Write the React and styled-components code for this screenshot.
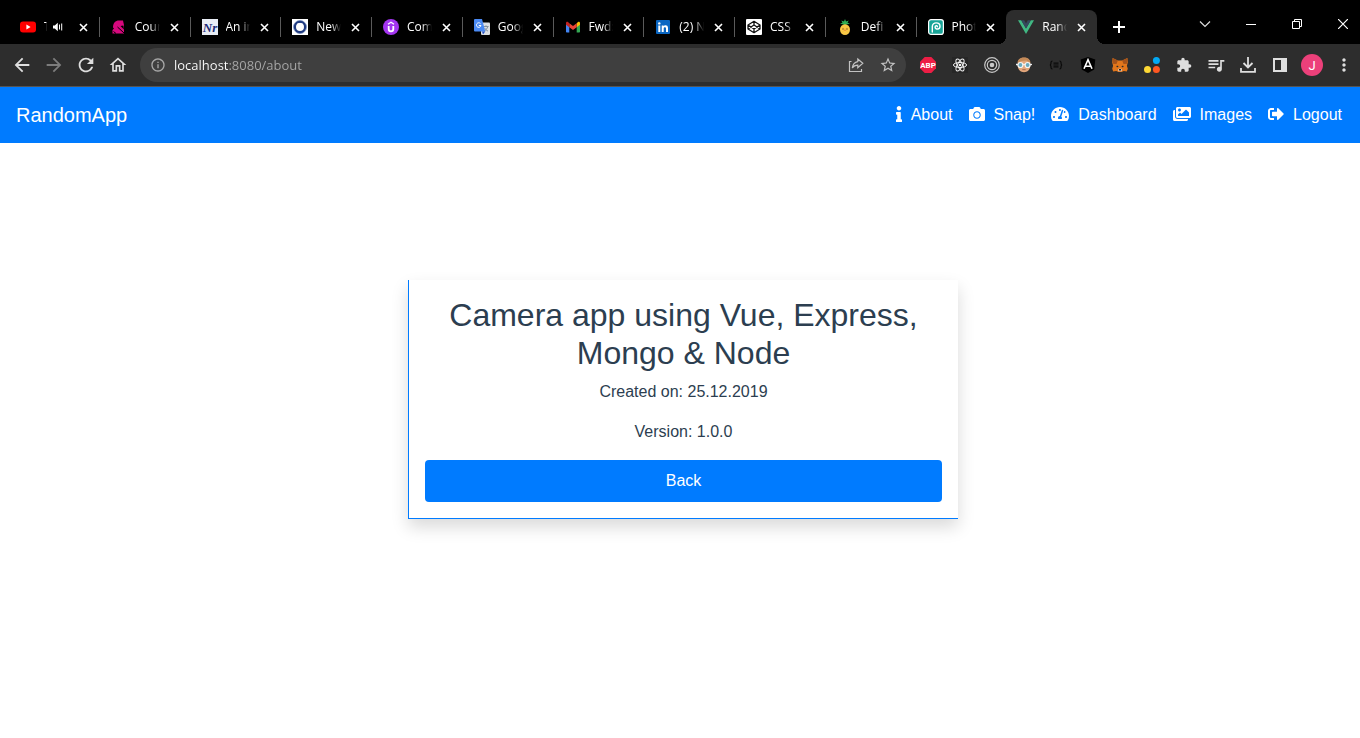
import React from "react";
import styled, { createGlobalStyle, css } from "styled-components";
import { FaInfo, FaCamera, FaTachometerAlt, FaImages, FaSignOutAlt } from "react-icons/fa";
import {
  MdArrowBack,
  MdArrowForward,
  MdRefresh,
  MdOutlineHome,
  MdInfoOutline,
  MdStarBorder,
  MdExtension,
  MdQueueMusic,
  MdMoreVert,
} from "react-icons/md";

const GlobalStyle = createGlobalStyle`
  *, *::before, *::after { box-sizing: border-box; }
  body { margin: 0; background: #fff; overflow-x: hidden; }
  button { border: 0; padding: 0; background: none; color: inherit; font: inherit; cursor: pointer; }
  svg { display: block; flex: none; }
`;

const uiFont = `"Open Sans", "Noto Sans", sans-serif`;
const pageFont = `"Liberation Sans", Arial, sans-serif`;

const Browser = styled.header`
  font-family: ${uiFont};
  background: #000;
  color: #fff;
`;

const TabStrip = styled.div`
  display: flex;
  height: 44px;
  padding-left: 8px;
  overflow: hidden;
`;

const TabList = styled.div`
  display: flex;
  flex: 1;
  min-width: 0;
  padding-top: 10px;
`;

const Tab = styled.div`
  position: relative;
  display: flex;
  align-items: center;
  flex: 1 1 0;
  min-width: 0;
  padding: 0 11px 0 12px;
  font-size: 12px;

  & + &::before {
    content: "";
    position: absolute;
    left: 0;
    top: 7px;
    width: 1px;
    height: 20px;
    background: ${(p) => (p.$active ? "transparent" : "#5a5a5a")};
  }

  ${(p) =>
    p.$active &&
    css`
      background: #2d2d2d;
      border-radius: 8px 8px 0 0;
      &::after {
        content: "";
        position: absolute;
        left: -8px;
        right: -8px;
        bottom: 0;
        height: 8px;
        background:
          radial-gradient(circle at 0 0, transparent 8px, #2d2d2d 8px) left / 8px 8px no-repeat,
          radial-gradient(circle at 100% 0, transparent 8px, #2d2d2d 8px) right / 8px 8px no-repeat;
      }
    `}
`;

const TabTitle = styled.span`
  flex: 1 1 0;
  min-width: 0;
  margin: 0 ${(p) => (p.$compact ? 6 : 10)}px 0 8px;
  line-height: 16px;
  white-space: nowrap;
  overflow: hidden;
  mask-image: linear-gradient(to right, #000 60%, transparent);
`;

const AudioButton = styled.button`
  margin-right: 16px;
`;

const TabClose = styled.button`
  width: 9px;
  height: 9px;
`;

const NewTab = styled.button`
  display: grid;
  place-items: center;
  width: 44px;
  padding-top: 10px;
`;

const WindowControls = styled.div`
  display: flex;
  margin: 0 -6px 0 41px;
`;

const WindowButton = styled.button`
  display: grid;
  place-items: center;
  width: 46px;
  height: 48px;
`;

const Toolbar = styled.div`
  display: flex;
  align-items: center;
  height: 43px;
  padding-left: 6px;
  background: #2d2d2d;
  border-bottom: 1px solid #555;
`;

const ToolButton = styled.button`
  display: grid;
  place-items: center;
  flex: none;
  width: 32px;
  height: 34px;
  color: ${(p) => (p.$dim ? "#7c7c7c" : "#dedede")};
`;

const AddressBar = styled.form`
  display: flex;
  align-items: center;
  flex: 1;
  min-width: 0;
  height: 34px;
  margin: 0 6px;
  padding: 0 2px;
  border-radius: 17px;
  background: #3f3f3f;
`;

const AddressInput = styled.input`
  flex: 1;
  min-width: 0;
  height: 24px;
  padding: 0;
  border: 0;
  outline: 0;
  font-family: ${uiFont};
  font-size: 13px;
  color: transparent;
  background: linear-gradient(to right, #fff 55px, #a8a8a8 55px);
  background-clip: text;
`;

const Avatar = styled.span`
  display: grid;
  place-items: center;
  width: 22px;
  height: 22px;
  border-radius: 50%;
  background: #ec407a;
  color: #fff;
  font-family: Roboto, sans-serif;
  font-size: 13px;
`;

const Navbar = styled.nav`
  display: flex;
  align-items: center;
  justify-content: space-between;
  min-height: 56px;
  padding: 0 18px 0 16px;
  background: #007bff;
  font-family: ${pageFont};
`;

const Brand = styled.a`
  color: #fff;
  font-size: 20px;
  line-height: 30px;
  text-decoration: none;
`;

const NavLinks = styled.div`
  display: flex;
  gap: 16px;
`;

const NavLink = styled.a`
  display: flex;
  align-items: center;
  gap: 9px;
  color: #fff;
  font-size: 16px;
  line-height: 24px;
  text-decoration: none;

  svg {
    width: ${(p) => p.$iconWidth}px;
    height: 16px;
    margin-bottom: 2px;
  }
`;

const Main = styled.main`
  display: flex;
  justify-content: center;
  padding: 137px 0 40px 6px;
  font-family: ${pageFont};
  color: #2c3e50;
`;

const Card = styled.section`
  width: 100%;
  max-width: 550px;
  padding: 16px;
  border-left: 1px solid #007bff;
  border-bottom: 1px solid #007bff;
  background: #fff;
  box-shadow: 0 8px 16px rgba(0, 0, 0, 0.15);
  text-align: center;
`;

const CardTitle = styled.h1`
  margin: 0 0 8px;
  font-size: 32px;
  font-weight: 400;
  line-height: 38px;
`;

const CardText = styled.p`
  margin: 0 0 16px;
  font-size: 16px;
  line-height: 24px;
`;

const BackButton = styled.button`
  width: 100%;
  height: 42px;
  border-radius: 4px;
  background: #007bff;
  color: #fff;
  font-family: ${pageFont};
  font-size: 16px;
`;

const Icon = ({ size = 16, box = 16, children }) => (
  <svg width={size} height={size} viewBox={`0 0 ${box} ${box}`} fill="none" aria-hidden="true">
    {children}
  </svg>
);

const YouTube = () => (
  <Icon>
    <rect x="0" y="2.5" width="16" height="11" rx="3" fill="#f00" />
    <path d="M6.400 5.600v4.800L10.600 8z" fill="#fff" />
  </Icon>
);
const Course = () => (
  <Icon>
    <path d="M1.500 14.500V11L3 9.500 2 8.500C2 4 4.500 1.500 8 1.500h4L13 6v8.500z" fill="#d6087d" />
    <path d="M6.500 8l6.500 6M2.500 12.500L5 14.500" stroke="#000" strokeWidth="1" />
    <path d="M12.400 6.500L9.500 7l3.500 3.500z" fill="#000" />
  </Icon>
);
const Nr = () => (
  <Icon>
    <path d="M0 0h16v16H0z" fill="#e9edf5" />
    <text x="8" y="12.500" fontSize="13" fontStyle="italic" fontWeight="700" textAnchor="middle" fontFamily="Liberation Serif, serif" fill="#1d2b75">Nr</text>
  </Icon>
);
const Ring = () => (
  <Icon>
    <path d="M0 0h16v16H0z" fill="#fff" />
    <circle cx="8" cy="8" r="5.200" stroke="#1f3a80" strokeWidth="2.400" />
    <circle cx="8" cy="8" r="6.600" stroke="#6f86b8" strokeWidth=".6" />
    <path d="M5 5.500C6.500 4 9.500 4 11 5.500" stroke="#fff" strokeWidth="1" />
  </Icon>
);
const Udemy = () => (
  <Icon>
    <circle cx="8" cy="8" r="8" fill="#a435f0" />
    <path d="M5.700 7v3a2.300 2.300 0 0 0 4.600 0V7" stroke="#fff" strokeWidth="1.800" />
    <path d="M5 5.200L8 3.200l3 2" stroke="#fff" strokeWidth="1.300" />
  </Icon>
);
const Translate = () => (
  <Icon>
    <rect x="7" y="3.500" width="9" height="12.500" rx="1" fill="#dcdfe3" />
    <path d="M9.500 7.500h5M12 6.300v1.200M13.800 7.500c-.6 2.200-2 3.700-3.600 4.600M10.600 9c.8 1.500 1.900 2.500 3.400 3.100" stroke="#7c8a99" strokeWidth=".9" />
    <path d="M1 0h7l3.300 12.500H1a1 1 0 0 1-1-1V1a1 1 0 0 1 1-1z" fill="#4a8af4" />
    <path d="M8 12.500h3.300L9 15.500z" fill="#2a56c6" />
    <path d="M6.500 4.600a2.300 2.300 0 1 0 .5 1.900H4.800" stroke="#fff" strokeWidth="1" />
  </Icon>
);
const Gmail = () => (
  <Icon>
    <path d="M1 4v8.500c0 .6.500 1 1 1h2.300V7z" fill="#4285f4" />
    <path d="M15 4v8.500c0 .6-.5 1-1 1h-2.300V7z" fill="#34a853" />
    <path d="M11.700 4.300L13 3.100c.8-.6 2-.1 2 1.100v1.500l-3.300 2.600z" fill="#fbbc04" />
    <path d="M4.300 8.300v-4L8 7.100l3.700-2.800v4L8 11z" fill="#ea4335" />
    <path d="M1 4.200C1 3 2.200 2.500 3 3.100l1.300 1.200v4L1 5.700z" fill="#c5221f" />
  </Icon>
);
const LinkedIn = () => (
  <Icon>
    <rect x="1" y="1" width="14" height="14" rx="1" fill="#0a66c2" />
    <circle cx="4.300" cy="4.400" r="1.200" fill="#fff" />
    <path d="M3.300 6.400h2V13h-2zM6.700 6.400h1.900v.9c.9-1.600 4.400-1.600 4.400 1.600V13h-2V9.600c0-2-2.300-1.800-2.300 0V13h-2z" fill="#fff" />
  </Icon>
);
const CodePen = () => (
  <Icon>
    <rect width="16" height="16" rx="1" fill="#fff" />
    <path d="M8 2.300l6 3.700v4L8 13.700 2 10V6zM8 2.300V6M8 10v3.700M2 6l6 4 6-4M2 10l6-4 6 4" stroke="#111" strokeWidth="1.300" strokeLinejoin="round" />
  </Icon>
);
const Pineapple = () => (
  <Icon>
    <path d="M8 6L3 4.500l2.500-.8L4.300 1.500 7 2.500 8 0l1 2.500 2.700-1-1.200 2.200 2.500.8z" fill="#2fae55" />
    <ellipse cx="8" cy="10.600" rx="5" ry="5.400" fill="#f9c846" />
    <path d="M5 7.500l6 6M11 7.500l-6 6" stroke="#f0b52e" strokeWidth=".6" />
    <circle cx="6" cy="10" r=".7" fill="#6b4a1e" />
    <circle cx="10" cy="10" r=".7" fill="#6b4a1e" />
    <path d="M7.200 11.300h1.600" stroke="#e0704a" strokeWidth=".8" />
  </Icon>
);
const Photopea = () => (
  <Icon>
    <rect x=".6" y=".6" width="14.800" height="14.800" rx="2.500" fill="#18a497" stroke="#fff" strokeWidth="1.200" />
    <path d="M4.300 13V7.500c0-5 7.700-4.600 7.700-.3 0 3.600-4.700 3.700-4.900.9-.1-1.500 2.100-1.800 2.300-.4" stroke="#fff" strokeWidth="1.400" strokeLinecap="round" />
  </Icon>
);
const Vue = () => (
  <Icon>
    <path d="M0 1.200h3.200L8 9.600l4.800-8.400H16L8 15z" fill="#41b883" />
    <path d="M3.200 1.200h3L8 4.400l1.800-3.200h3L8 9.600z" fill="#35495e" />
  </Icon>
);
const Cross = () => (
  <Icon size={9} box={9}>
    <path d="M1 1l7 7M8 1L1 8" stroke="#fff" strokeWidth="1.600" />
  </Icon>
);

const Adblock = () => (
  <Icon>
    <path d="M4.700 0h6.600L16 4.700v6.600L11.300 16H4.700L0 11.300V4.700z" fill="#ed1e45" />
    <text x="8" y="11" fontSize="8" fontWeight="700" textAnchor="middle" fontFamily="Roboto, sans-serif" fill="#fff">ABP</text>
  </Icon>
);
const Atom = () => (
  <Icon>
    <path d="M0 0h16v16H0z" fill="#262626" />
    <g stroke="#f2f2f2" strokeWidth="1">
      <ellipse cx="8" cy="8" rx="6.600" ry="2.500" />
      <ellipse cx="8" cy="8" rx="6.600" ry="2.500" transform="rotate(60 8 8)" />
      <ellipse cx="8" cy="8" rx="6.600" ry="2.500" transform="rotate(120 8 8)" />
    </g>
    <circle cx="8" cy="8" r="1.300" fill="#f2f2f2" />
  </Icon>
);
const Target = () => (
  <Icon>
    <circle cx="8" cy="8" r="7.300" stroke="#c8c8c8" strokeWidth="1.200" />
    <circle cx="8" cy="8" r="4.700" stroke="#c8c8c8" strokeWidth="1.200" />
    <circle cx="8" cy="8" r="2.300" fill="#c8c8c8" />
  </Icon>
);
const Face = () => (
  <Icon>
    <path d="M1.800 6C2 2.500 4.600.8 8 .8s6 1.700 6.200 5.200v3c0 3.700-2.800 6.200-6.200 6.200S1.800 12.700 1.800 9z" fill="#e3a77c" />
    <path d="M1.500 6C1.500 2 5 .5 8 .5c3.500 0 6.500 1.800 6.500 5.500l-4-2.500C7 3.800 4 4 1.500 6z" fill="#c48a58" />
    <path d="M0 7.500h16" stroke="#eee" strokeWidth="1.300" />
    <circle cx="4.400" cy="8" r="2.500" fill="#69a9bd" stroke="#f4f4f4" strokeWidth="1.200" />
    <circle cx="11.600" cy="8" r="2.500" fill="#69a9bd" stroke="#f4f4f4" strokeWidth="1.200" />
    <path d="M6.300 12.700h3.400" stroke="#a45f45" strokeWidth=".9" />
  </Icon>
);
const Braces = () => (
  <Icon>
    <path d="M4.500 4C3 4 3 4.500 3 5.500S3 8 1.800 8C3 8 3 9.500 3 10.500s0 1.500 1.500 1.500M11.500 4C13 4 13 4.500 13 5.500S13 8 14.200 8C13 8 13 9.500 13 10.500s0 1.500-1.500 1.500M5.500 6.200h5M5.500 8h5M5.500 9.800h5" stroke="#0a0a0a" strokeWidth="1.200" />
  </Icon>
);
const Angular = () => (
  <Icon>
    <path d="M8 0l7.300 2.600-1.100 9.800L8 16l-6.200-3.600L.7 2.600z" fill="#000" />
    <path d="M4 11.800L8 2.800l4 9M5.500 9.300h5" stroke="#fff" strokeWidth="1.600" />
  </Icon>
);
const Fox = () => (
  <Icon>
    <path d="M.6 1l5.200 2.600h4.400L15.400 1l.4 4.500-.9 3.300.9 3-1 2.700-3-.6L9.600 15H6.400L4.200 13.900l-3 .6-1-2.700.9-3L.2 5.500z" fill="#e2761b" />
    <path d="M.6 1l5.200 2.600L4.500 7 1 6.800zM15.400 1l-5.200 2.600L11.500 7l3.500-.2z" fill="#a5531b" />
    <path d="M5 8.500l1.600 1-.8.700-1.500-.3zM11 8.500l-1.600 1 .8.700 1.500-.3z" fill="#2c2c2c" />
    <path d="M6.200 12l1.800-.5 1.800.5.100 2.200H6.100z" fill="#d7c1b3" />
    <path d="M7 12h2v1.500H7z" fill="#222" />
  </Icon>
);
const Dots = () => (
  <Icon>
    <circle cx="12.400" cy="3.500" r="3.500" fill="#03a9f4" />
    <circle cx="3.500" cy="12.400" r="3.500" fill="#fdd835" />
    <circle cx="12.400" cy="12.400" r="3.500" fill="#ff5722" />
  </Icon>
);
const Download = () => (
  <Icon>
    <path d="M8 0v10M3.500 6L8 10.500 12.500 6" stroke="currentColor" strokeWidth="1.800" />
    <path d="M1 11v3.800h14V11" stroke="currentColor" strokeWidth="1.800" />
  </Icon>
);
const SidePanel = () => (
  <Icon>
    <path d="M1 1h14v14H1zM3 3v10h6V3z" fill="currentColor" fillRule="evenodd" />
  </Icon>
);
const Share = () => (
  <Icon>
    <path d="M3.500 4.500H1.500v10h12V12" stroke="#c2c2c2" strokeWidth="1.200" />
    <path d="M9.800 2l5 4.300-5 4.300V8.200C7.500 8.200 5.500 9 4.300 11c.4-3.300 2.500-5.900 5.500-6.400z" stroke="#c2c2c2" strokeWidth="1.200" />
  </Icon>
);
const Speaker = () => (
  <Icon size={10} box={10}>
    <path d="M0 3.400h1.800L4.800.8v8.400L1.800 6.600H0z" fill="#fff" />
    <path d="M6.500 2.500v5M8.700 1.500v7" stroke="#fff" strokeWidth="1" />
  </Icon>
);

const tabs = [
  { title: "T", icon: YouTube, audio: true },
  { title: "Cour", icon: Course },
  { title: "An in", icon: Nr },
  { title: "New", icon: Ring },
  { title: "Com", icon: Udemy },
  { title: "Goog", icon: Translate },
  { title: "Fwd:", icon: Gmail },
  { title: "(2) N", icon: LinkedIn },
  { title: "CSS", icon: CodePen },
  { title: "Defi", icon: Pineapple },
  { title: "Phot", icon: Photopea },
  { title: "Rand", icon: Vue, active: true },
];

const extensions = [
  ["Adblock Plus", Adblock],
  ["React tools", Atom],
  ["Recorder", Target],
  ["Reader", Face],
  ["JSON", Braces],
  ["Angular tools", Angular],
  ["Wallet", Fox],
  ["Colors", Dots],
];

const links = [
  { label: "About", icon: FaInfo, width: 6 },
  { label: "Snap!", icon: FaCamera, width: 16 },
  { label: "Dashboard", icon: FaTachometerAlt, width: 18 },
  { label: "Images", icon: FaImages, width: 18 },
  { label: "Logout", icon: FaSignOutAlt, width: 16 },
];

export default function App() {
  return (
    <>
      <GlobalStyle />
      <Browser>
        <TabStrip>
          <TabList role="tablist">
            {tabs.map(({ title, icon: Favicon, audio, active }) => (
              <Tab key={title} role="tab" aria-selected={!!active} $active={active}>
                <Favicon />
                <TabTitle $compact={audio}>{title}</TabTitle>
                {audio && (
                  <AudioButton aria-label="Mute tab">
                    <Speaker />
                  </AudioButton>
                )}
                <TabClose aria-label="Close tab">
                  <Cross />
                </TabClose>
              </Tab>
            ))}
          </TabList>
          <NewTab aria-label="New tab">
            <Icon size={12} box={12}>
              <path d="M6 0v12M0 6h12" stroke="#fff" strokeWidth="2" />
            </Icon>
          </NewTab>
          <WindowControls>
            <WindowButton aria-label="Search tabs">
              <Icon size={12} box={12}>
                <path d="M1 3.500l5 5 5-5" stroke="#ddd" strokeWidth="1.200" />
              </Icon>
            </WindowButton>
            <WindowButton aria-label="Minimize">
              <Icon size={10} box={10}>
                <path d="M0 5.500h10" stroke="#fff" strokeWidth="1" />
              </Icon>
            </WindowButton>
            <WindowButton aria-label="Restore">
              <Icon size={10} box={10}>
                <path d="M.5 2.500h7v7h-7zM2.500 2.500v-2h7v7h-2" stroke="#fff" strokeWidth="1" />
              </Icon>
            </WindowButton>
            <WindowButton aria-label="Close">
              <Icon size={10} box={10}>
                <path d="M0 0l10 10M10 0L0 10" stroke="#fff" strokeWidth="1.200" />
              </Icon>
            </WindowButton>
          </WindowControls>
        </TabStrip>
        <Toolbar>
          <ToolButton aria-label="Back"><MdArrowBack size={22} /></ToolButton>
          <ToolButton aria-label="Forward" $dim><MdArrowForward size={22} /></ToolButton>
          <ToolButton aria-label="Reload"><MdRefresh size={22} /></ToolButton>
          <ToolButton aria-label="Home"><MdOutlineHome size={20} /></ToolButton>
          <AddressBar onSubmit={(e) => e.preventDefault()}>
            <ToolButton type="button" aria-label="Site information"><MdInfoOutline size={16} color="#a8a8a8" /></ToolButton>
            <AddressInput aria-label="Address" defaultValue="localhost:8080/about" />
            <ToolButton type="button" aria-label="Share"><Share /></ToolButton>
            <ToolButton type="button" aria-label="Bookmark"><MdStarBorder size={18} color="#c2c2c2" /></ToolButton>
          </AddressBar>
          {extensions.map(([name, Glyph]) => (
            <ToolButton key={name} aria-label={name}><Glyph /></ToolButton>
          ))}
          <ToolButton aria-label="Extensions"><MdExtension size={16} /></ToolButton>
          <ToolButton aria-label="Media"><MdQueueMusic size={20} /></ToolButton>
          <ToolButton aria-label="Downloads"><Download /></ToolButton>
          <ToolButton aria-label="Side panel"><SidePanel /></ToolButton>
          <ToolButton aria-label="Profile"><Avatar>J</Avatar></ToolButton>
          <ToolButton aria-label="Menu"><MdMoreVert size={20} /></ToolButton>
        </Toolbar>
      </Browser>
      <Navbar>
        <Brand href="#home">RandomApp</Brand>
        <NavLinks>
          {links.map(({ label, icon: Glyph, width }) => (
            <NavLink key={label} href={`#${label}`} $iconWidth={width}>
              <Glyph />
              {label}
            </NavLink>
          ))}
        </NavLinks>
      </Navbar>
      <Main>
        <Card>
          <CardTitle>Camera app using Vue, Express, Mongo &amp; Node</CardTitle>
          <CardText>Created on: 25.12.2019</CardText>
          <CardText>Version: 1.0.0</CardText>
          <BackButton>Back</BackButton>
        </Card>
      </Main>
    </>
  );
}
